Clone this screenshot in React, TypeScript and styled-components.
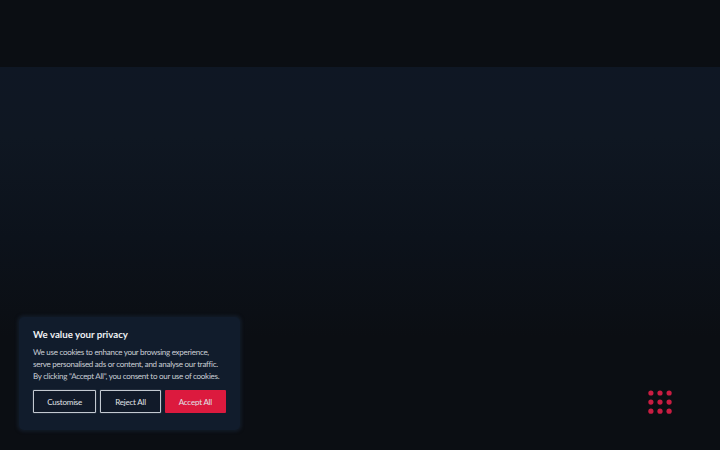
import React from "react";
import styled, { createGlobalStyle } from "styled-components";

const Global = createGlobalStyle`
  html, body { margin: 0; padding: 0; background: #0b0e13; }
  body { font-family: "Lato", "Liberation Sans", sans-serif; text-rendering: geometricPrecision; }
`;

const Page = styled.div`
  width: 720px;
  height: 450px;
  overflow: hidden;
  position: relative;
  display: flex;
  flex-direction: column;
  background: #0b0e13;
`;

const Header = styled.header`
  height: 67px;
  flex: none;
  background: #0b0e13;
`;

const Hero = styled.main`
  flex: 1;
  background: linear-gradient(180deg, #0f1724 0px, #0f1722 70px, #0c121b 170px, #0b0e13 270px);
`;

const Banner = styled.section`
  position: absolute;
  left: 19px;
  top: 317px;
  width: 221px;
  height: 113px;
  box-sizing: border-box;
  padding: 11px 14px 0;
  background: #111c2c;
  border-radius: 5px;
  box-shadow: 0 0 3px 2px rgba(20, 29, 43, 0.75);
`;

const Title = styled.h2`
  margin: 0 0 4px;
  font-size: 9.7px;
  line-height: 14px;
  font-weight: 700;
  color: #eef0f3;
  white-space: nowrap;
`;

const Body = styled.p`
  margin: 0 0 8px;
  font-size: 8px;
  letter-spacing: -0.27px;
  line-height: 12px;
  color: #c9ced5;
  white-space: nowrap;
`;

const Actions = styled.div`
  display: flex;
  gap: 4px;
`;

const Button = styled.button<{ $w: number; $primary?: boolean }>`
  width: ${(p) => p.$w}px;
  height: 23px;
  box-sizing: border-box;
  padding: 0;
  font-family: inherit;
  font-size: 8px;
  letter-spacing: -0.2px;
  color: #e0e3e8;
  border-radius: 1px;
  border: ${(p) => (p.$primary ? "none" : "1px solid #c3c9d1")};
  box-shadow: ${(p) => (p.$primary ? "none" : "0 0 1px #aab1bb")};
  background: ${(p) => (p.$primary ? "#dc1a3e" : "#111a29")};
`;

const Launcher = styled.svg`
  position: absolute;
  left: 648px;
  top: 390px;
  width: 24px;
  height: 24px;
`;

const dots = [0, 1, 2].flatMap((r) => [0, 1, 2].map((c) => ({ x: 2.9 + c * 9.1, y: 3 + r * 9.1 })));

export default function App() {
  return (
    <Page>
      <Global />
      <Header />
      <Hero />
      <Banner>
        <Title>We value your privacy</Title>
        <Body>
          We use cookies to enhance your browsing experience,
          <br />
          serve personalised ads or content, and analyse our traffic.
          <br />
          By clicking "Accept All", you consent to our use of cookies.
        </Body>
        <Actions>
          <Button $w={64}>Customise</Button>
          <Button $w={61}>Reject All</Button>
          <Button $w={62} $primary>Accept All</Button>
        </Actions>
      </Banner>
      <Launcher viewBox="0 0 24 24">
        {dots.map((d, i) => (
          <circle key={i} cx={d.x} cy={d.y} r={2.6} fill="#c91d42" />
        ))}
      </Launcher>
    </Page>
  );
}
